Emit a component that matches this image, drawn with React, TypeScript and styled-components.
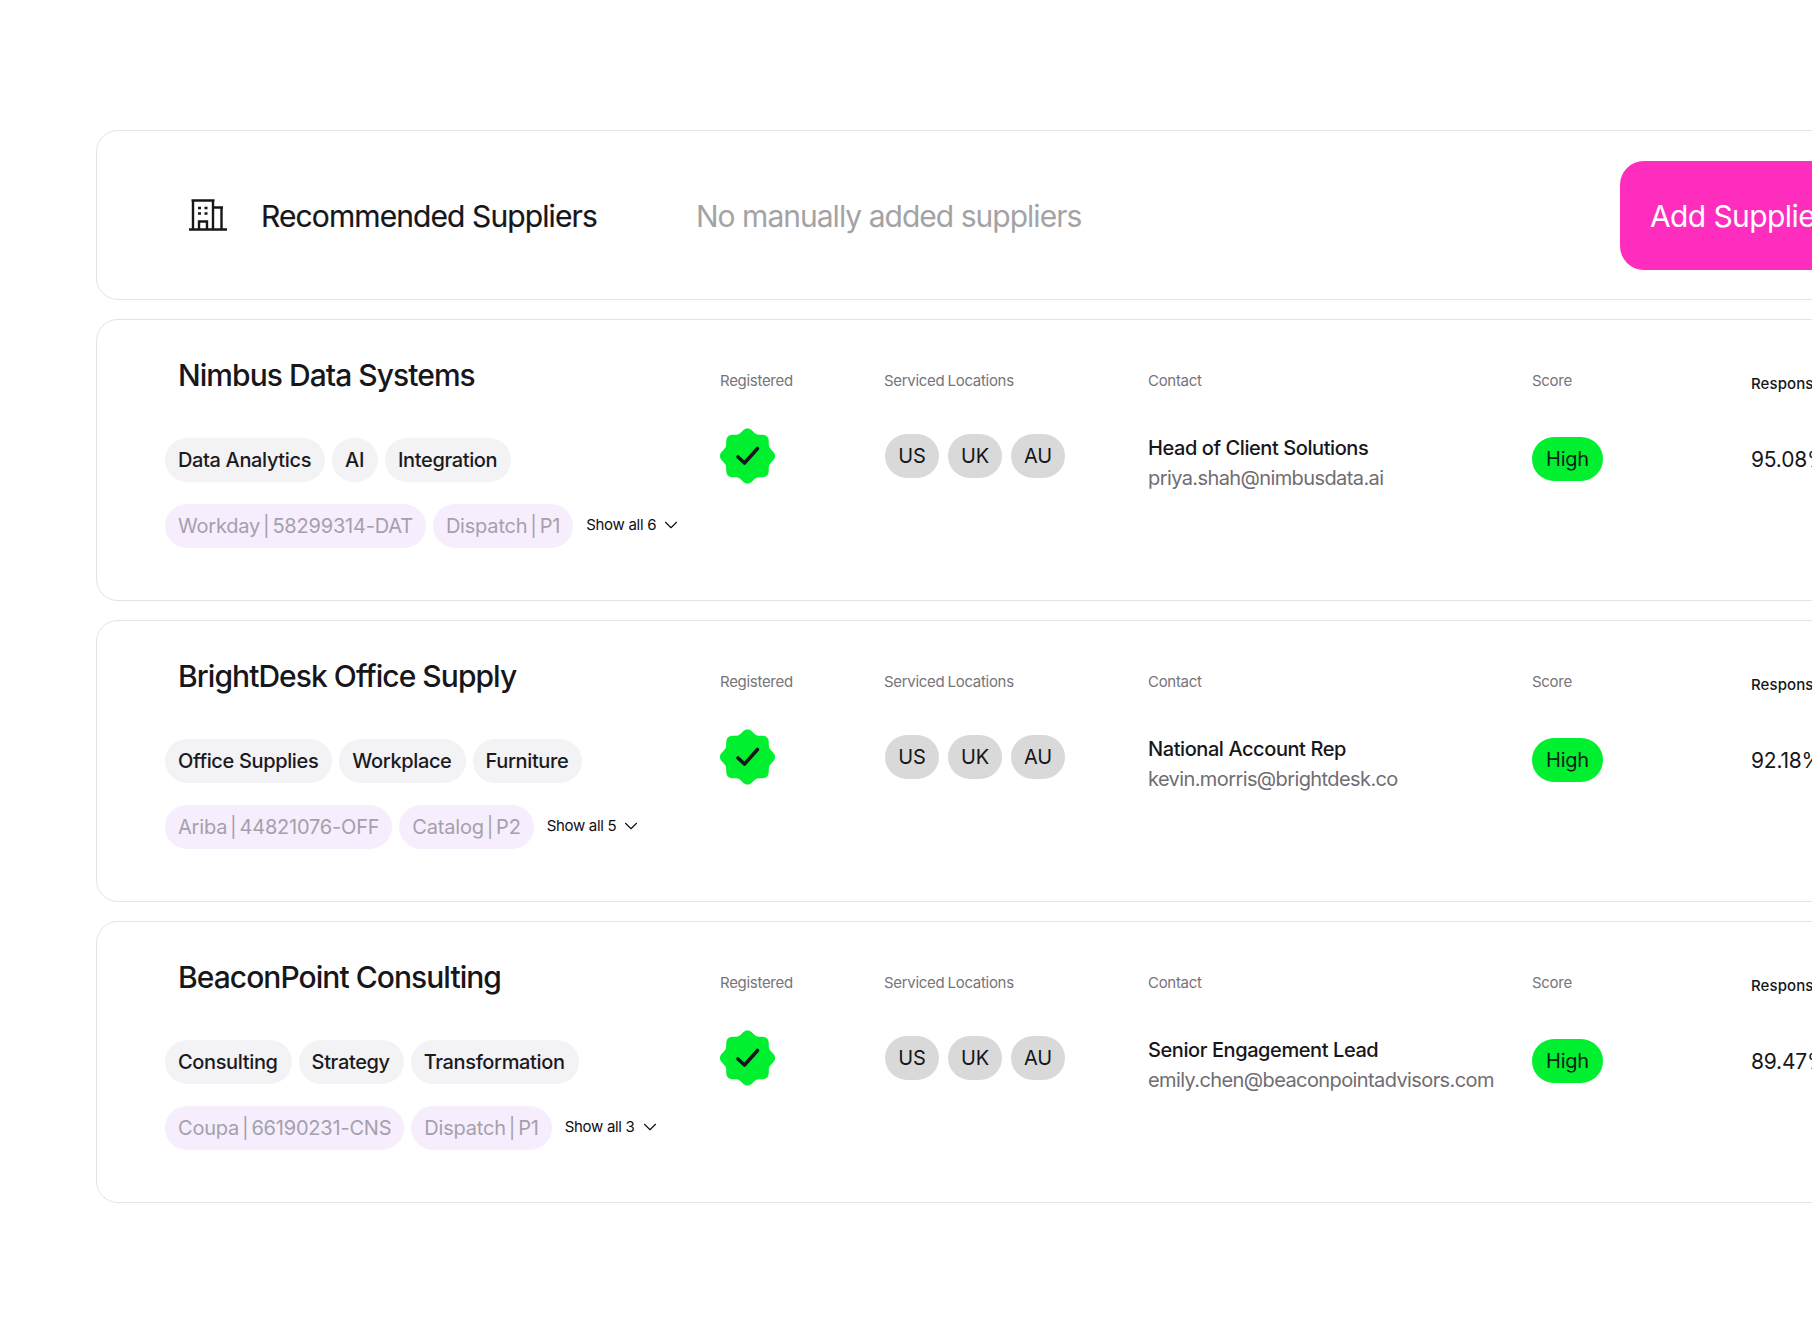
import React from "react";
import styled, { createGlobalStyle } from "styled-components";
import { ChevronDown } from "lucide-react";

const Global = createGlobalStyle`
  html, body { margin: 0; padding: 0; background: #fff; }
  body { font-family: Inter, "Liberation Sans", sans-serif; color: #17161a; overflow: hidden; }
`;

const Page = styled.div`
  width: 1812px;
  height: 1332px;
  overflow: hidden;
  box-sizing: border-box;
  padding: 130px 0 0 96px;
  display: flex;
  flex-direction: column;
  gap: 19px;
`;

const Card = styled.section`
  width: 1800px;
  flex: none;
  box-sizing: border-box;
  background: #fff;
  border: 1.5px solid #e3e3e4;
  border-radius: 22px;
`;

const Header = styled(Card)`
  height: 170px;
  display: flex;
  align-items: center;
  padding-left: 91px;
`;

const HeaderTitle = styled.h1`
  margin: 2px 0 0 33px;
  width: 435px;
  flex: none;
  font-size: 30px;
  line-height: 40px;
  font-weight: 400;
  letter-spacing: -0.9px;
  -webkit-text-stroke: 0.2px #17161a;
`;

const HeaderNote = styled.p`
  margin: 2px 0 0;
  width: 924px;
  flex: none;
  font-size: 30px;
  line-height: 40px;
  letter-spacing: -0.98px;
  color: #a3a3a5;
`;

const AddButton = styled.button`
  flex: none;
  height: 109px;
  padding: 2px 30px 0;
  border: 0;
  border-radius: 24px;
  background: #ff2dbd;
  color: #fff;
  font: 400 30px/40px Inter, sans-serif;
  letter-spacing: -0.6px;
  text-align: left;
`;

const Row = styled(Card)`
  height: 282px;
  display: grid;
  grid-template-columns: 555px 164px 264px 384px 219px 1fr;
  padding: 37px 0 0 68px;
`;

const Main = styled.div`
  display: flex;
  flex-direction: column;
`;

const Name = styled.h2`
  margin: 0 0 0 13px;
  font-size: 30px;
  line-height: 36px;
  font-weight: 500;
  letter-spacing: -0.95px;
  color: #17161a;
`;

const ChipRow = styled.div<{ $top: number }>`
  display: flex;
  align-items: center;
  gap: 7px;
  margin-top: ${(p) => p.$top}px;
`;

const Chip = styled.span<{ $ref?: boolean }>`
  height: 44px;
  padding: 0 ${(p) => (p.$ref ? 13 : 14)}px 0 13px;
  display: inline-flex;
  align-items: center;
  border-radius: 22px;
  font-size: 20px;
  font-weight: ${(p) => (p.$ref ? 400 : 450)};
  letter-spacing: ${(p) => (p.$ref ? "-0.2px" : "-0.36px")};
  word-spacing: ${(p) => (p.$ref ? "-2.500px" : "0")};
  white-space: nowrap;
  background: ${(p) => (p.$ref ? "#f6eefc" : "#f3f2f5")};
  color: ${(p) => (p.$ref ? "#a5a0ac" : "#1b1a1e")};
`;

const ShowAll = styled.button`
  margin: -2px 0 0 6px;
  padding: 0;
  border: 0;
  background: none;
  display: inline-flex;
  align-items: center;
  gap: 4px;
  color: #0e0e10;
  font: 400 15px/20px Inter, sans-serif;
  letter-spacing: -0.3px;
  white-space: nowrap;
`;

const Col = styled.div`
  display: flex;
  flex-direction: column;
`;

const Label = styled.div<{ $strong?: boolean }>`
  margin-top: ${(p) => (p.$strong ? 17 : 14)}px;
  font-size: 15px;
  line-height: 20px;
  font-weight: ${(p) => (p.$strong ? 500 : 400)};
  letter-spacing: ${(p) => (p.$strong ? "0.1px" : "-0.3px")};
  word-spacing: ${(p) => (p.$strong ? "0" : "-0.8px")};
  white-space: nowrap;
  color: ${(p) => (p.$strong ? "#17161a" : "#77747b")};
`;

const BadgeWrap = styled.div`
  margin-top: 37px;
  width: 56px;
  height: 56px;
`;

const Locations = styled.div`
  margin: 43px 0 0 1px;
  display: flex;
  gap: 9px;
`;

const Loc = styled.span`
  width: 54px;
  height: 44px;
  border-radius: 22px;
  background: #d9d9d9;
  display: flex;
  align-items: center;
  justify-content: center;
  font-size: 20px;
  letter-spacing: -0.2px;
  color: #17161a;
`;

const ContactTitle = styled.div`
  margin-top: 42px;
  font-size: 20px;
  line-height: 30px;
  font-weight: 450;
  letter-spacing: -0.42px;
  white-space: nowrap;
`;

const ContactMail = styled.div`
  font-size: 20px;
  line-height: 30px;
  letter-spacing: -0.6px;
  color: #6f6d73;
  white-space: nowrap;
`;

const High = styled.span`
  margin-top: 46px;
  align-self: flex-start;
  width: 71px;
  height: 44px;
  border-radius: 22px;
  background: #00f030;
  display: flex;
  align-items: center;
  justify-content: center;
  font-size: 20px;
  letter-spacing: -0.2px;
  color: #10201a;
`;

const Percent = styled.div`
  margin-top: 51px;
  font-size: 21px;
  line-height: 30px;
  letter-spacing: -0.2px;
  white-space: nowrap;
`;

const BuildingIcon = () => (
  <svg width="40" height="36" viewBox="0 0 40 36" fill="none" stroke="#17161a" strokeWidth="2.400">
    <path d="M1 32.500h38M5 32.500V4M3.500 3.500h23M25 4v28.500M25 10.500h10M33.500 10v22.500" />
    <path d="M11 32V24.500h8V32" />
    <path d="M10 11h3M16.500 11h3M10 16.500h3M16.500 16.500h3" strokeWidth="2.400" />
  </svg>
);

const scallop = (() => {
  const pts: string[] = [];
  const n = 160;
  for (let i = 0; i < n; i++) {
    const t = (i / n) * Math.PI * 2;
    const r = 25.6 + 2 * Math.cos(8 * t);
    pts.push(`${(27.500 + r * Math.sin(t)).toFixed(2)},${(28 - r * Math.cos(t)).toFixed(2)}`);
  }
  return pts.join(" ");
})();

const VerifiedBadge = () => (
  <svg width="56" height="56" viewBox="0 0 56 56">
    <polygon points={scallop} fill="#00f030" />
    <path d="M18 29l6.500 6L37.500 20.500" fill="none" stroke="#17161a" strokeWidth="3.600" strokeLinecap="round" strokeLinejoin="round" />
  </svg>
);

const suppliers = [
  {
    name: "Nimbus Data Systems",
    tags: ["Data Analytics", "AI", "Integration"],
    refs: ["Workday | 58299314-DAT", "Dispatch | P1"],
    more: 6,
    role: "Head of Client Solutions",
    mail: "priya.shah@nimbusdata.ai",
    rate: "95.08%",
  },
  {
    name: "BrightDesk Office Supply",
    tags: ["Office Supplies", "Workplace", "Furniture"],
    refs: ["Ariba | 44821076-OFF", "Catalog | P2"],
    more: 5,
    role: "National Account Rep",
    mail: "kevin.morris@brightdesk.co",
    rate: "92.18%",
  },
  {
    name: "BeaconPoint Consulting",
    tags: ["Consulting", "Strategy", "Transformation"],
    refs: ["Coupa | 66190231-CNS", "Dispatch | P1"],
    more: 3,
    role: "Senior Engagement Lead",
    mail: "emily.chen@beaconpointadvisors.com",
    rate: "89.47%",
  },
];

export default function App() {
  return (
    <Page>
      <Global />
      <Header>
        <BuildingIcon />
        <HeaderTitle>Recommended Suppliers</HeaderTitle>
        <HeaderNote>No manually added suppliers</HeaderNote>
        <AddButton>Add Supplier</AddButton>
      </Header>
      {suppliers.map((s) => (
        <Row key={s.name}>
          <Main>
            <Name>{s.name}</Name>
            <ChipRow $top={45}>
              {s.tags.map((t) => (
                <Chip key={t}>{t}</Chip>
              ))}
            </ChipRow>
            <ChipRow $top={22}>
              {s.refs.map((t) => (
                <Chip key={t} $ref>
                  {t}
                </Chip>
              ))}
              <ShowAll>
                Show all {s.more}
                <ChevronDown size={22} strokeWidth={1.200} />
              </ShowAll>
            </ChipRow>
          </Main>
          <Col>
            <Label>Registered</Label>
            <BadgeWrap>
              <VerifiedBadge />
            </BadgeWrap>
          </Col>
          <Col>
            <Label>Serviced Locations</Label>
            <Locations>
              <Loc>US</Loc>
              <Loc>UK</Loc>
              <Loc>AU</Loc>
            </Locations>
          </Col>
          <Col>
            <Label>Contact</Label>
            <ContactTitle>{s.role}</ContactTitle>
            <ContactMail>{s.mail}</ContactMail>
          </Col>
          <Col>
            <Label>Score</Label>
            <High>High</High>
          </Col>
          <Col>
            <Label $strong>Response</Label>
            <Percent>{s.rate}</Percent>
          </Col>
        </Row>
      ))}
    </Page>
  );
}
